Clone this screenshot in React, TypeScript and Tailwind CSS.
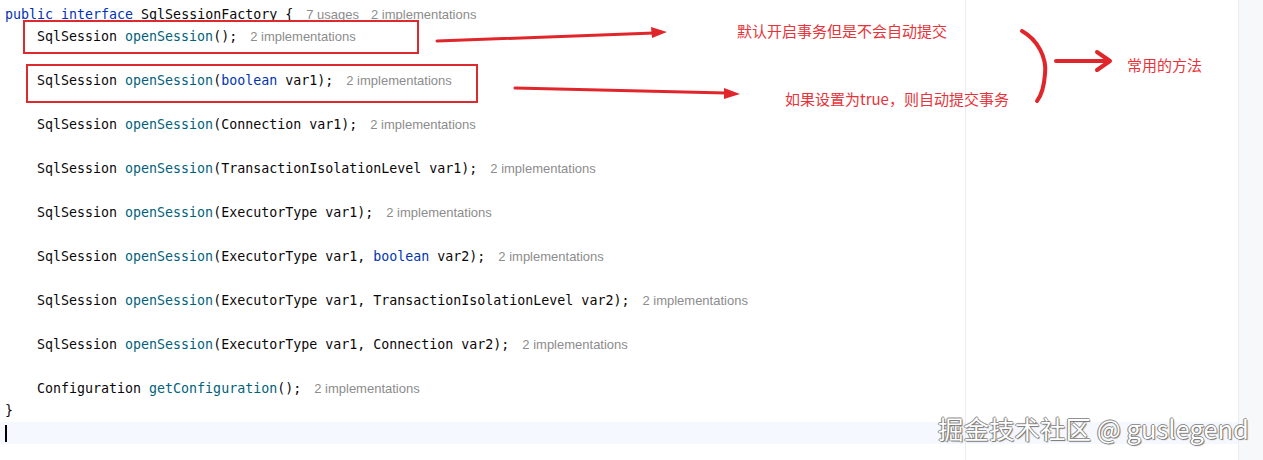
import React from "react";

type Tok = { t: string; c?: "kw" | "fn" };

const lines: { indent: boolean; toks: Tok[]; hints?: string[] }[] = [
  {
    indent: false,
    toks: [{ t: "public interface", c: "kw" }, { t: " SqlSessionFactory {" }],
    hints: ["7 usages", "2 implementations"],
  },
  { indent: true, toks: [{ t: "SqlSession " }, { t: "openSession", c: "fn" }, { t: "();" }], hints: ["2 implementations"] },
  { indent: true, toks: [] },
  {
    indent: true,
    toks: [{ t: "SqlSession " }, { t: "openSession", c: "fn" }, { t: "(" }, { t: "boolean", c: "kw" }, { t: " var1);" }],
    hints: ["2 implementations"],
  },
  { indent: true, toks: [] },
  { indent: true, toks: [{ t: "SqlSession " }, { t: "openSession", c: "fn" }, { t: "(Connection var1);" }], hints: ["2 implementations"] },
  { indent: true, toks: [] },
  {
    indent: true,
    toks: [{ t: "SqlSession " }, { t: "openSession", c: "fn" }, { t: "(TransactionIsolationLevel var1);" }],
    hints: ["2 implementations"],
  },
  { indent: true, toks: [] },
  { indent: true, toks: [{ t: "SqlSession " }, { t: "openSession", c: "fn" }, { t: "(ExecutorType var1);" }], hints: ["2 implementations"] },
  { indent: true, toks: [] },
  {
    indent: true,
    toks: [
      { t: "SqlSession " },
      { t: "openSession", c: "fn" },
      { t: "(ExecutorType var1, " },
      { t: "boolean", c: "kw" },
      { t: " var2);" },
    ],
    hints: ["2 implementations"],
  },
  { indent: true, toks: [] },
  {
    indent: true,
    toks: [{ t: "SqlSession " }, { t: "openSession", c: "fn" }, { t: "(ExecutorType var1, TransactionIsolationLevel var2);" }],
    hints: ["2 implementations"],
  },
  { indent: true, toks: [] },
  {
    indent: true,
    toks: [{ t: "SqlSession " }, { t: "openSession", c: "fn" }, { t: "(ExecutorType var1, Connection var2);" }],
    hints: ["2 implementations"],
  },
  { indent: true, toks: [] },
  { indent: true, toks: [{ t: "Configuration " }, { t: "getConfiguration", c: "fn" }, { t: "();" }], hints: ["2 implementations"] },
  { indent: false, toks: [{ t: "}" }] },
];

function tokClass(c?: string) {
  if (c === "kw") return "text-[#0033b3]";
  if (c === "fn") return "text-[#00627a]";
  return "text-[#080808]";
}

export default function App() {
  return (
    <div className="relative flex h-[460px] w-[1263px] overflow-hidden bg-white">
      {/* editor */}
      <div className="relative flex-1 pt-[4px] font-['DejaVu_Sans_Mono',monospace] text-[13.3px]">
        {lines.map((ln, i) => (
          <div key={i} className={`flex h-[22px] items-center whitespace-pre ${ln.indent ? "pl-[37px]" : "pl-[5px]"}`}>
            {ln.toks.map((tk, j) => (
              <span key={j} className={tokClass(tk.c)}>
                {tk.t}
              </span>
            ))}
            {ln.hints && (
              <span className="ml-[13px] flex gap-[12px] font-['Liberation_Sans',sans-serif] text-[13px] text-[#8c8c8c]">
                {ln.hints.map((h) => (
                  <span key={h}>{h}</span>
                ))}
              </span>
            )}
          </div>
        ))}
        {/* caret line */}
        <div className="flex h-[22px] items-center bg-[#f5f8fe] pl-[5px]">
          <div className="h-[17px] w-[2px] bg-black" />
        </div>

        {/* right margin guide */}
        <div className="absolute bottom-0 left-[965px] top-0 w-px bg-[#ebecf0]" />

        {/* annotations */}
        <svg className="pointer-events-none absolute inset-0" width="1238" height="460">
          <g fill="none" stroke="#dc2a2f" strokeWidth="2">
            <rect x="24" y="21" width="394" height="32" />
            <rect x="27" y="65" width="450" height="37" />
          </g>
          <g stroke="#e0262b" strokeWidth="3" strokeLinecap="round" fill="none">
            <path d="M437 41 L654 33" />
            <path d="M515 88 L726 93" />
          </g>
          <g fill="#e0262b">
            <polygon points="667,32 651,27 652,38" />
            <polygon points="740,94 724,88 724,99" />
          </g>
          <g stroke="#e0262b" strokeWidth="4" strokeLinecap="round" strokeLinejoin="round" fill="none">
            <path d="M1022 31 C1038 40 1047 58 1045 74 C1044 87 1041 96 1037 101" />
            <path d="M1056 61 H1108" />
            <path d="M1097 52 L1110 61 L1097 70" />
          </g>
        </svg>

        <div className="absolute left-[737px] top-[21px] font-['Noto_Sans_CJK_SC',sans-serif] text-[15px] leading-[20px] text-[#e8333a]">
          默认开启事务但是不会自动提交
        </div>
        <div className="absolute left-[785px] top-[89px] font-['Noto_Sans_CJK_SC',sans-serif] text-[15px] leading-[20px] text-[#e8333a]">
          如果设置为true，则自动提交事务
        </div>
        <div className="absolute left-[1127px] top-[55px] font-['Noto_Sans_CJK_SC',sans-serif] text-[15px] leading-[20px] text-[#e8333a]">
          常用的方法
        </div>

        {/* watermark */}
        <div className="absolute left-[938px] top-[411px] whitespace-pre font-['Noto_Sans_CJK_SC',sans-serif] text-[25.5px] leading-[34px] text-white [text-shadow:0_0_1px_#555,1px_1px_1px_#777,-1px_0_0_#999,0_-1px_0_#999]">
          掘金技术社区 @ guslegend
        </div>
      </div>

      {/* right gutter */}
      <div className="w-[25px] border-l border-[#ebecf0] bg-[#f7f8fa]" />
    </div>
  );
}
